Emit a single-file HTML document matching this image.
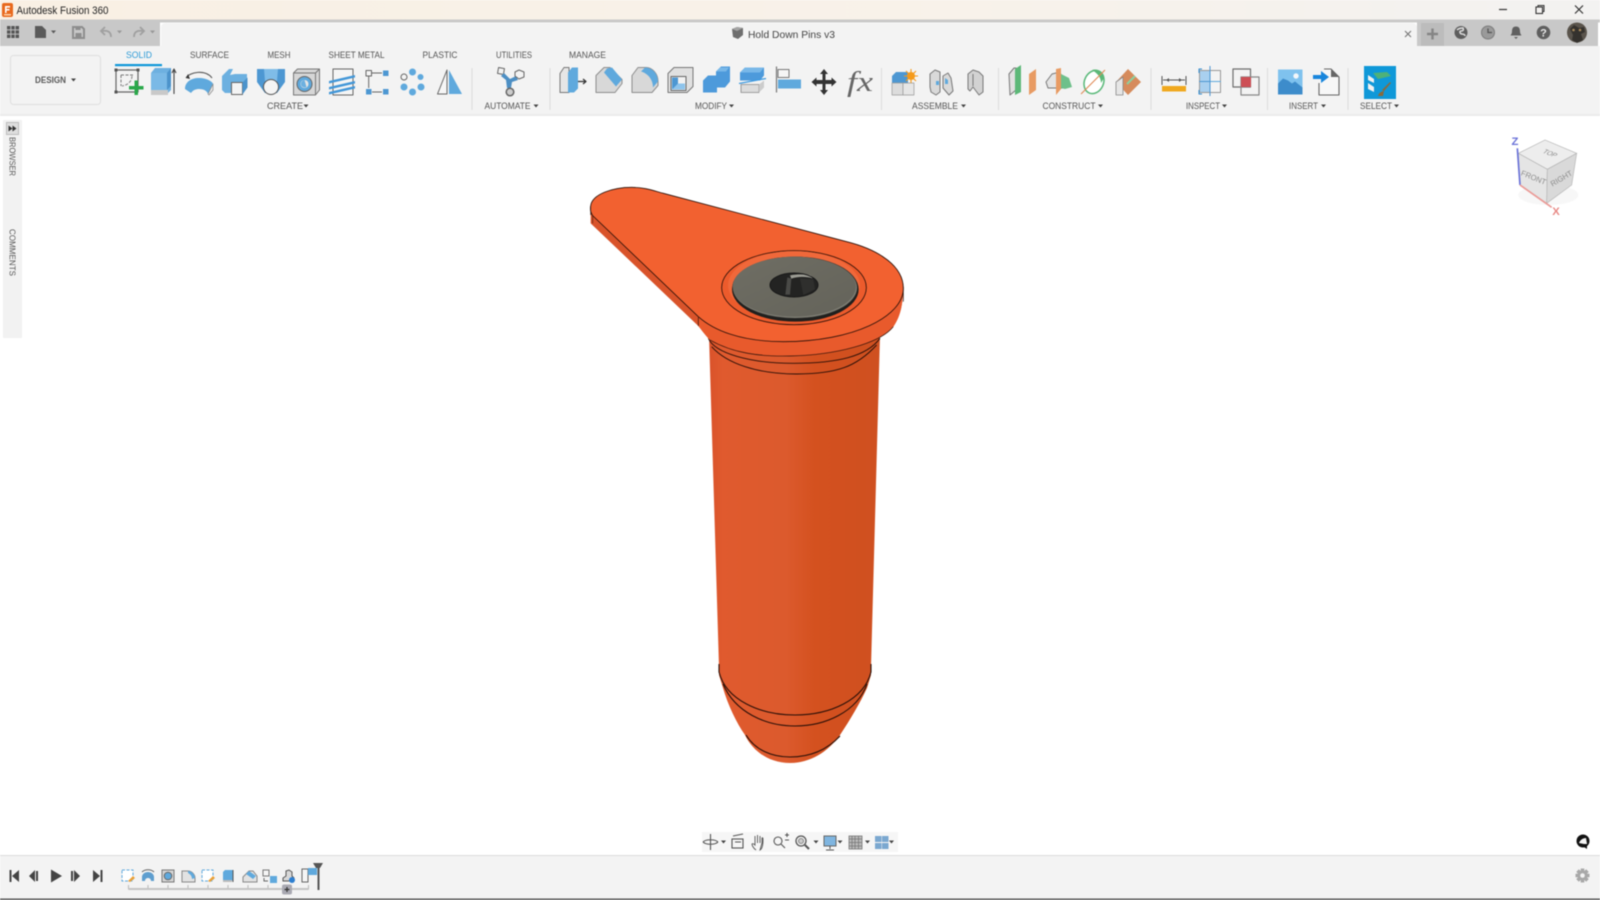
<!DOCTYPE html>
<html lang="en"><head><meta charset="utf-8"><title>Autodesk Fusion 360</title>
<style>
html,body{margin:0;padding:0;background:#fff;width:1600px;height:900px;overflow:hidden}
svg{display:block;filter:blur(.4px)}
text{font-family:"Liberation Sans",sans-serif}
.t{font-size:9px;fill:#555;text-anchor:middle}
.a{fill:#444}
.ic *{stroke-linejoin:round}
</style></head><body>
<svg width="1600" height="900" viewBox="0 0 1600 900" xmlns="http://www.w3.org/2000/svg">
<defs>
<linearGradient id="tb" x1="0" x2="1" y1="0" y2="0"><stop offset="0" stop-color="#f9f0e4"/><stop offset=".6" stop-color="#f8f2ea"/><stop offset="1" stop-color="#f3f2f1"/></linearGradient>
<linearGradient id="cyl" x1="0" x2="1" y1="0" y2="0"><stop offset="0" stop-color="#d9522a"/><stop offset=".08" stop-color="#e05a2e"/><stop offset=".45" stop-color="#dc5a2d"/><stop offset=".62" stop-color="#d4511f"/><stop offset="1" stop-color="#cf5020"/></linearGradient>
<linearGradient id="head" x1="0" x2="1" y1="0" y2="1"><stop offset="0" stop-color="#6f6e64"/><stop offset="1" stop-color="#64635a"/></linearGradient>
</defs>

<!-- title bar -->
<rect width="1600" height="20" fill="url(#tb)"/>
<rect y="19.500" width="1600" height="3" fill="#c9c9c8"/>
<rect x="0" y="20" width="160" height="26" fill="#c8c8c8"/>
<rect x="1417" y="20" width="181" height="26" fill="#c8c8c8"/>
<path d="M161 114V28q0-5 5-5H1412q5 0 5 5V46H1600V114Z" fill="#f3f3f3"/>
<rect y="46" width="162" height="68" fill="#f3f3f3"/>
<rect y="114" width="1600" height="2" fill="#ebebeb"/>

<!-- app logo -->
<rect x="2" y="3" width="11" height="14" rx="2" fill="#e8691d"/><path d="M5 6h5v1.600H6.600v1.400H9.500v1.500H6.600V13H5Z" fill="#fff"/><rect x="4" y="14" width="7" height="1.500" fill="#ffd2a8"/>
<text x="16.500" y="14" font-size="11" fill="#222" textLength="92" lengthAdjust="spacingAndGlyphs">Autodesk Fusion 360</text>

<!-- window controls -->
<path d="M1499 9.500h8" stroke="#333" stroke-width="1.200"/>
<rect x="1536" y="7" width="6.500" height="6.500" fill="none" stroke="#333" stroke-width="1.100"/><path d="M1538 7V5.500h6V11.500h-1.500" fill="none" stroke="#333" stroke-width="1"/>
<path d="M1575 5.500l8 8m0-8l-8 8" stroke="#333" stroke-width="1.200"/>

<!-- quick access -->
<g transform="translate(0,-1)">
<g fill="#555"><rect x="7" y="27" width="3.400" height="3.400"/><rect x="11.300" y="27" width="3.400" height="3.400"/><rect x="15.600" y="27" width="3.400" height="3.400"/><rect x="7" y="31.300" width="3.400" height="3.400"/><rect x="11.300" y="31.300" width="3.400" height="3.400"/><rect x="15.600" y="31.300" width="3.400" height="3.400"/><rect x="7" y="35.600" width="3.400" height="3.400"/><rect x="11.300" y="35.600" width="3.400" height="3.400"/><rect x="15.600" y="35.600" width="3.400" height="3.400"/></g>
<path d="M35 27h7l4 4v8H35Z" fill="#5a5a5a"/><path d="M51 31.500h5l-2.500 3Z" fill="#5a5a5a"/>
<path d="M73 28h9l2 2v9H73Z" fill="none" stroke="#8d8d8d" stroke-width="2"/><rect x="75.500" y="28" width="5" height="3" fill="#8d8d8d"/><rect x="75.500" y="34" width="6" height="4" fill="#8d8d8d"/>
<path d="M111 38c0-5-3-7-9-6M105 28l-4 4 4 4" fill="none" stroke="#a0a0a0" stroke-width="1.800"/><path d="M117 31.500h5l-2.500 3Z" fill="#999"/>
<path d="M134 38c0-5 3-7 9-6M140 28l4 4-4 4" fill="none" stroke="#a0a0a0" stroke-width="1.800"/><path d="M150 31.500h5l-2.500 3Z" fill="#999"/>
</g>

<!-- doc title / tab -->
<path d="M732 29l5-2 6 1v7l-5 4-5-2Z" fill="#6e6e6e"/><path d="M732 29l5 2 6-3-6-1Z" fill="#a4a4a4"/>
<text x="748" y="38" font-size="10.500" fill="#444" textLength="87" lengthAdjust="spacingAndGlyphs">Hold Down Pins v3</text>
<path d="M1405 31l6 6m0-6l-6 6" stroke="#777" stroke-width="1.100"/>
<rect x="1421" y="23" width="23" height="23" fill="#bcbcbc"/>
<path d="M1427 34h11M1432.500 28.500v11" stroke="#858585" stroke-width="2.400"/>
<g transform="translate(0,-1)">
<circle cx="1461" cy="33.500" r="6.500" fill="#5e5e5e"/><path d="M1457 31c2-2 4-2 6-2 1 2 0 3-2 3s-1 3 1 3 3 1 3 2" fill="none" stroke="#ddd" stroke-width="1.500"/>
<circle cx="1488" cy="33.500" r="6.500" fill="#9a9a9a" stroke="#7d7d7d"/><path d="M1488 29.500v4h4" fill="none" stroke="#555" stroke-width="1.300"/>
<path d="M1516 27.500c3 0 4 2 4 5 0 2 1 3 1.500 4h-11c.5-1 1.500-2 1.500-4 0-3 1-5 4-5ZM1514 38h4l-2 2Z" fill="#606060"/>
<circle cx="1543.500" cy="33.500" r="6.800" fill="#5f5f5f"/><text x="1543.500" y="37.500" font-size="11" font-weight="bold" fill="#e8e8e8" text-anchor="middle">?</text>
<circle cx="1577" cy="33.500" r="10" fill="#5a544c"/><path d="M1570 30l4-4 5 3 5-1 1 5-4 2 2 6-6 3-5-3 1-5Z" fill="#35322e"/><circle cx="1573.500" cy="31" r="1.300" fill="#a88a5c"/><circle cx="1580" cy="31" r="1.300" fill="#a88a5c"/>
</g>

<!-- design button -->
<rect x="10.500" y="55.500" width="90" height="49" rx="3" fill="#f3f3f3" stroke="#dfdfdf"/>
<text x="35" y="83" font-size="9" font-weight="bold" fill="#5a5a5a" textLength="31" lengthAdjust="spacingAndGlyphs">DESIGN</text>
<path d="M71 78.500h5l-2.500 3Z" fill="#444"/>

<!-- tabs -->
<text class="t" x="139" y="58" style="fill:#2c9ad6" textLength="26" lengthAdjust="spacingAndGlyphs">SOLID</text>
<rect x="115" y="64" width="47" height="2.200" fill="#0f97d8"/>
<text class="t" x="209.500" y="58" textLength="39" lengthAdjust="spacingAndGlyphs">SURFACE</text>
<text class="t" x="279" y="58" textLength="23" lengthAdjust="spacingAndGlyphs">MESH</text>
<text class="t" x="356.500" y="58" textLength="56" lengthAdjust="spacingAndGlyphs">SHEET METAL</text>
<text class="t" x="440" y="58" textLength="35" lengthAdjust="spacingAndGlyphs">PLASTIC</text>
<text class="t" x="514" y="58" textLength="36" lengthAdjust="spacingAndGlyphs">UTILITIES</text>
<text class="t" x="587.500" y="58" textLength="37" lengthAdjust="spacingAndGlyphs">MANAGE</text>

<!-- dividers -->
<g stroke="#dcdcdc"><path d="M472 68V110M550 68V110M881.500 68V110M998.500 68V110M1151 68V110M1267.500 68V110M1348 68V110"/></g>

<!-- group labels -->
<g class="t">
<text class="t" x="285" y="109" textLength="36" lengthAdjust="spacingAndGlyphs">CREATE</text><path class="a" d="M303.500 104.500h5l-2.500 3Z"/>
<text class="t" x="507.500" y="109" textLength="46" lengthAdjust="spacingAndGlyphs">AUTOMATE</text><path class="a" d="M533.500 104.500h5l-2.500 3Z"/>
<text class="t" x="711" y="109" textLength="32" lengthAdjust="spacingAndGlyphs">MODIFY</text><path class="a" d="M729 104.500h5l-2.500 3Z"/>
<text class="t" x="935" y="109" textLength="46" lengthAdjust="spacingAndGlyphs">ASSEMBLE</text><path class="a" d="M961 104.500h5l-2.500 3Z"/>
<text class="t" x="1069" y="109" textLength="53" lengthAdjust="spacingAndGlyphs">CONSTRUCT</text><path class="a" d="M1098 104.500h5l-2.500 3Z"/>
<text class="t" x="1203" y="109" textLength="34" lengthAdjust="spacingAndGlyphs">INSPECT</text><path class="a" d="M1222 104.500h5l-2.500 3Z"/>
<text class="t" x="1303.500" y="109" textLength="29" lengthAdjust="spacingAndGlyphs">INSERT</text><path class="a" d="M1321 104.500h5l-2.500 3Z"/>
<text class="t" x="1376" y="109" textLength="32" lengthAdjust="spacingAndGlyphs">SELECT</text><path class="a" d="M1394 104.500h5l-2.500 3Z"/>
</g>

<!-- CREATE icons -->
<g class="ic">
<g transform="translate(115,69)">
<rect x="1" y="1" width="22" height="22" fill="none" stroke="#666" stroke-width="1.200"/>
<g fill="#555"><rect x="-.5" y="-.5" width="3" height="3"/><rect x="21.500" y="-.5" width="3" height="3"/><rect x="-.5" y="21.500" width="3" height="3"/></g>
<path d="M6 6h12M6 6v11" stroke="#777" fill="none" stroke-dasharray="3 1.500"/><path d="M17 7c0 5-4 9-10 10" stroke="#888" fill="none" stroke-width="1.100" stroke-dasharray="3 1.500"/>
<path d="M14 17h5.500v-5.500h3.500V17h5.500v3.500h-5.500V26h-3.500v-5.500H14Z" fill="#2aa84a"/>
</g>
<g transform="translate(0,-2)">
<path d="M151 75l4-5h16v22l-3 3H151Z" fill="#6db0e0"/><path d="M151 75h16v17h-16Z" fill="#7ab9e6"/><path d="M167 75l4-5v18l-4 4Z" fill="#4c93cb"/><path d="M151 92h17v5H151Z" fill="#c9c9c9"/><path d="M174 96V72m-2 3l2-4 2 4" stroke="#444" fill="none" stroke-width="1.100"/>
<path d="M186 80c3-6 20-9 26 0" fill="none" stroke="#555" stroke-width="1.100"/><path d="M188 76l-2 4 4 1Z" fill="#333"/>
<path d="M185 91c0-7 6-11 14-11s14 4 14 6l-5 10c-1-3-4-5-9-5-3 0-6 1-8 4Z" fill="#5fa9dd"/><path d="M208 96l5-10v6l-4 5Z" fill="#e8e8e8" stroke="#888" stroke-width=".7"/>
<path d="M222 82v-4l7-7 4 0-3 6 5-1h12v8l-4 4h-11v7h-7l-3-3Z" fill="#6cb0e0"/><rect x="231.500" y="84.500" width="11" height="12" fill="#f4f4f4" stroke="#666"/><path d="M242.500 84.500l5-5v10l-5 7Z" fill="#4c93cb"/>
<path d="M257 71h28v13l-8 11h-12l-8-11Z" fill="#4d97d2"/><path d="M264 71h14l-1 12h-12Z" fill="#7fbce8"/><circle cx="271" cy="89" r="7.500" fill="#f4f4f4" stroke="#555"/>
<path d="M293.500 75l4-4h22v21l-4 5h-22Z" fill="#d6d6d6" stroke="#777"/><path d="M315.500 75h-22M315.500 75v22M315.500 75l4-4" stroke="#777" fill="none"/><circle cx="304.500" cy="86" r="7.500" fill="#5fa9dd" stroke="#666"/><circle cx="304.500" cy="86" r="4" fill="#e5e5e5"/><path d="M304.500 82a4 4 0 0 0-3 6 4 4 0 0 0 5 1Z" fill="#6cb0e0"/>
<rect x="333" y="71" width="20" height="26" fill="#f5f5f5" stroke="#666"/><path d="M329 83l26-6v2.500l-26 6ZM329 89l26-6v2.500l-26 6ZM329 94l26-6v2.500l-26 6Z" fill="#4397d8"/>
<rect x="366" y="72.500" width="5.500" height="5.500" fill="#f4f4f4" stroke="#666"/><rect x="383" y="72.500" width="5.500" height="5.500" fill="#4d97d2"/><rect x="366" y="91" width="5.500" height="5.500" fill="#4d97d2"/><rect x="383" y="91" width="5.500" height="5.500" fill="#4d97d2"/><path d="M372 75h10M368.700 78.500V90M372 94h10" stroke="#666"/>
<circle cx="412.500" cy="74" r="3.500" fill="#5fa9dd"/><circle cx="404" cy="79" r="3" fill="#f4f4f4" stroke="#666"/><circle cx="420.500" cy="79" r="3" fill="#5fa9dd"/><circle cx="404" cy="89" r="3.500" fill="#5fa9dd"/><circle cx="421" cy="89" r="3.500" fill="#5fa9dd"/><circle cx="412.500" cy="94" r="3.500" fill="#5fa9dd"/>
<path d="M447 72v24h-9.500Z" fill="#f6f6f6" stroke="#666"/><path d="M449 72l13 24h-13Z" fill="#5fa9dd"/>

<!-- automate -->
<rect x="498" y="70" width="6" height="6" fill="#f3f3f3" stroke="#666" transform="rotate(10 501 73)"/>
<path d="M504 75l6 6 6-3 2 4-6 2-1 6h-4l-1-8-5-4Z" fill="#4d8fc4"/><path d="M519 72l5 2v5l-5 2-4-3v-4Z" fill="#f3f3f3" stroke="#666"/><circle cx="510" cy="94" r="3.800" fill="#ccc" stroke="#666" stroke-width="1.500"/>

<!-- MODIFY icons -->
<g transform="translate(0,-.5)">
<path d="M560 76l4-6h5v25h-9Z" fill="#e6e6e6" stroke="#777"/><path d="M568 75l4-5h6v21l-4 4h-6Z" fill="#5fa9dd"/><path d="M578 84h7m-2-2.500l3 2.500-3 2.500" stroke="#333" fill="none" stroke-width="1.200"/>
<path d="M596 78l8-8h6l12 12v4l-7 9H596Z" fill="#d8d8d8" stroke="#8d8d8d"/><path d="M607 71l5-1 10 12-6 7-12-14Z" fill="#5fa9dd"/>
<path d="M632 78l6-8h8c6 0 12 6 12 14v4l-6 7H632Z" fill="#d8d8d8" stroke="#8d8d8d"/><path d="M645 70c8 0 13 7 13 14l-5 6c0-8-5-14-12-16Z" fill="#5fa9dd"/>
<path d="M668 76l6-6h19v19l-6 6h-19Z" fill="#e0e0e0" stroke="#777"/><rect x="671" y="79" width="15" height="14" fill="#f2f2f2" stroke="#666"/><path d="M672 80h6v6h7v6H672Z" fill="#4d97d2"/><path d="M672 92l6-6h7v6Z" fill="#8ec4ec"/>
<path d="M703 83l5-5h8v-4l5-5h9v15l-5 6h-8v5h-14Z" fill="#4d9adb"/><path d="M716 74l4-4h9l-3 4Z" fill="#79b8e8"/>
<path d="M740 75l5-5h19v8l-4 5h-20Z" fill="#4d9adb"/><path d="M745 70h19l-4 5h-20Z" fill="#79b8e8"/><path d="M739 86l27-5" stroke="#3d9ae0" stroke-width="1.200"/><path d="M741 87h18v8h-18Z" fill="#dcdcdc" stroke="#888" stroke-width=".8"/><path d="M759 87l5-4v7l-5 5Z" fill="#ccc"/>
<path d="M776.500 69V95" stroke="#777" stroke-width="1.200"/><rect x="778" y="72" width="11" height="8" fill="#f5f5f5" stroke="#777"/><rect x="778" y="82" width="23" height="9" fill="#5fa9dd"/>
</g>
<path d="M824 71l4 5h-2.500v6h6v-2.500l5 4.500-5 4.500v-2.500h-6v6h2.500l-4 5-4-5h2.500v-6h-6v2.500l-5-4.500 5-4.500v2.500h6v-6H820Z" fill="#333"/>
<text x="847" y="93" font-style="italic" font-size="28" fill="#666" style="font-family:'Liberation Serif',serif" textLength="26" lengthAdjust="spacingAndGlyphs">fx</text>

<!-- ASSEMBLE -->
<path d="M892 78l4-4h12v11h-16Z" fill="#4d97d2"/><rect x="892" y="85" width="11" height="12" fill="#dcdcdc" stroke="#999" stroke-width=".7"/><rect x="903" y="85" width="11" height="12" fill="#e6e6e6" stroke="#999" stroke-width=".7"/><circle cx="911" cy="78" r="4" fill="#f59a1a"/><path d="M911 71v14M904 78h14M906 73l10 10M916 73l-10 10" stroke="#f59a1a" stroke-width="1.100"/>
<path d="M930 76l5-4 5 2v20l-4 3-5-3-1-5Z" fill="#d9d9d9" stroke="#777"/><path d="M943 78l5-3 3 5 2 13-4 4-6-7Z" fill="#d9d9d9" stroke="#777"/><path d="M936 83h3v4h-3ZM945 80l3 2v4h-3Z" fill="#5fa9dd"/>
<path d="M968 76l5-4 6 2 4 4v16l-4 3-3-4-3-4-3 4-2-2Z" fill="#d2d2d2" stroke="#777"/><path d="M973 76v12" stroke="#777"/>

<!-- CONSTRUCT -->
<path d="M1009 76l5-6h2v22l-6 5Z" fill="#e0e0e0" stroke="#777"/><path d="M1015 71l6-4v27l-6 3Z" fill="#5cb878"/><path d="M1029 76l7-5v21l-7 5Z" fill="#e89b63"/>
<path d="M1046 84l6-8 8-2 3 8 1 8h-16Z" fill="#e4e4e4" stroke="#777"/><path d="M1056 71l5-1v21l-5 6Z" fill="#e89b63"/><path d="M1061 76l8 4 3 9-7 2-4-1Z" fill="#6ec08a"/>
<ellipse cx="1094" cy="84" rx="9.500" ry="12" transform="rotate(25 1094 84)" fill="#fff" stroke="#58b878" stroke-width="1.500"/><path d="M1092 72c7-2 12 3 12 8l-3 5c0-6-4-10-9-13Z" fill="#5cb878"/><path d="M1081 96l24-24" stroke="#e08a55" stroke-width="1.100"/>
<path d="M1116 84l12-13 13 13-13 13Z" fill="#d68b5c"/><path d="M1116 84l7-5v18h-7Z" fill="#e6e6e6" stroke="#888" stroke-width=".8"/><path d="M1127 86l8-8" stroke="#8cd0a0" stroke-width="2"/>

<!-- INSPECT -->
<rect x="1162" y="88" width="24" height="5.500" fill="#f0a81e"/><path d="M1162 78v9M1186 78v9M1163 82h22" stroke="#555" fill="none"/><path d="M1166 82l3-2v4ZM1182 82l-3-2v4Z" fill="#555"/>
<path d="M1199 72h11v23h-11Z" fill="#a9d0ef"/><rect x="1199.500" y="72.500" width="21" height="22" fill="none" stroke="#999"/><path d="M1199 83.500h22" stroke="#5fa9dd"/><path d="M1199 83.500h11" stroke="#4d97d2"/><path d="M1202 71h-3v4M1202 96h-3v-4" stroke="#2e8bd0" fill="none"/><path d="M1210 68v30" stroke="#4d97d2"/>
<rect x="1233" y="71" width="17.500" height="18" fill="#f3f3f3" stroke="#6e6e6e" stroke-width="1.200"/><rect x="1241" y="79" width="18" height="18" fill="none" stroke="#888" stroke-width="1.200"/><rect x="1241" y="79" width="10" height="10" fill="#cd4f55"/>

<!-- INSERT -->
<rect x="1278" y="71.500" width="24.500" height="25" fill="#7fc2ee"/><path d="M1278 96.500v-11l5-5 5 2 4 3 3-2 7.500 6v7Z" fill="#3d8ccb"/><circle cx="1296" cy="78" r="2.700" fill="#f3f7fa"/>
<path d="M1324 71h7l8 8v18h-20V85" fill="#f7f7f7" stroke="#666" stroke-width="1.100"/><path d="M1331 71v8h8Z" fill="#666"/><path d="M1313 77h8v-4l8 6-8 6v-4h-8Z" fill="#1986dc"/>

<!-- SELECT -->
<rect x="1364" y="68" width="32" height="33" fill="#0f98d8"/>
<path d="M1373 75l14-1 4 4-13 3Z" fill="#4eb179"/><path d="M1368 77l6 4v4l-6-3ZM1368 85l6 4v5l-6-3Z" fill="#f2f2f2"/><path d="M1378 98c1-4 5-5 6-5l-1 5ZM1382 92l8-8 1 1-7 8Z" fill="#8a6a3c"/>
</g>
</g>

<!-- left panel -->
<rect x="3" y="120" width="19" height="218" fill="#f2f2f2"/>
<rect x="6.500" y="122.500" width="12" height="12" fill="#dedede" stroke="#bdbdbd"/>
<path d="M8.500 125.500l4 3-4 3ZM12.500 125.500l4 3-4 3Z" fill="#333"/>
<text class="t" transform="translate(9.500,137) rotate(90)" x="0" y="0" style="text-anchor:start;font-size:8.500px" textLength="39" lengthAdjust="spacingAndGlyphs">BROWSER</text>
<text class="t" transform="translate(9.500,229) rotate(90)" x="0" y="0" style="text-anchor:start;font-size:8.500px" textLength="47" lengthAdjust="spacingAndGlyphs">COMMENTS</text>

<!-- view cube -->
<g transform="translate(1490,120) scale(.3333)">
<ellipse cx="175" cy="225" rx="90" ry="30" fill="#f2f2f2" opacity=".6"/>
<path d="M85 100L165 60 260 100 172 148Z" fill="#ededed" stroke="#b5b5b5" stroke-width="2"/>
<path d="M85 100L172 148 170 250 90 195Z" fill="#e5e5e5" stroke="#b5b5b5" stroke-width="2"/>
<path d="M172 148L260 100 245 195 170 250Z" fill="#d9d9d9" stroke="#b5b5b5" stroke-width="2"/>
<path d="M82 85L90 195" stroke="#6a72d8" stroke-width="5"/><path d="M90 195L185 262" stroke="#eb9a96" stroke-width="5"/>
<text x="75" y="75" font-size="34" font-weight="bold" fill="#6a72d8" text-anchor="middle">Z</text>
<text x="198" y="285" font-size="34" font-weight="bold" fill="#e88a86" text-anchor="middle">X</text>
<text transform="translate(175,105) rotate(22) skewX(-25)" font-size="20" fill="#8c8c8c" text-anchor="middle">TOP</text>
<text transform="translate(128,180) rotate(22)" font-size="23" fill="#8c8c8c" text-anchor="middle">FRONT</text>
<text transform="translate(218,182) rotate(-30)" font-size="23" fill="#8c8c8c" text-anchor="middle">RIGHT</text>
</g>

<!-- MODEL -->
<!-- cylinder + nose as one silhouette -->
<path d="M709 335H880L871 667V675L867 688C860 703 850 720 840 735C828 752 810 763 790 763C768 763 752 750 745 735C736 722 728 705 723 688L719 675V667Z" fill="url(#cyl)"/>
<g fill="none" stroke="#2a1008" stroke-width="1.100">
<path d="M719 664V672C726 700 760 715 795 715C830 715 864 700 871 672V664"/>
<path d="M723 684C735 712 765 726 795 726C825 726 857 712 867 684"/>
<path d="M746 735C755 750 772 757 790 757C808 757 826 751 840 736"/>
</g>
<!-- model upper in crop coordinates -->
<g transform="translate(570,170) scale(.33333)">
<g fill="none" stroke="#2a1008" stroke-width="2.800">
<path d="M415 505C435 550 540 580 670 580S890 560 930 505"/>
<path d="M425 530C470 580 560 612 680 612S860 590 920 525"/>
</g>
<!-- flange side -->
<path d="M62 108V160L385 468C395 480 405 495 420 510C490 550 570 560 660 558C800 555 930 520 970 470C990 440 998 410 1000 355Z" fill="#d9532a"/>
<path d="M385 440V468C395 480 405 495 420 510C490 550 570 560 660 558C800 555 930 520 970 470C990 440 998 410 1000 355Z" fill="#e85a2c" stroke="none"/>
<path d="M420 510C490 550 570 560 660 558C800 555 930 520 970 470" fill="none" stroke="#2a1008" stroke-width="2"/>
<path d="M385 442L385 468" stroke="#2a1008" stroke-width="2"/>
<path d="M68 132V160" stroke="#2a1008" stroke-width="1.500"/>
<!-- flange top -->
<path d="M62 108C66 72 130 52 185 52C225 52 250 62 280 70L830 215C930 240 1000 290 1000 355C1000 440 850 515 640 515C510 515 430 480 385 440L68 137C62 128 60 118 62 108Z" fill="#f26130" stroke="#2a1008" stroke-width="2.500"/>
<path d="M62 108V135M1000 350V395" stroke="#2a1008" stroke-width="2" fill="none"/>
<!-- counterbore -->
<ellipse cx="672" cy="353" rx="217" ry="111" fill="#ec5b2c" stroke="#2a1008" stroke-width="2.500"/>
<ellipse cx="672" cy="346" rx="198" ry="103" fill="#f0683a"/>
<ellipse cx="676" cy="358" rx="190" ry="97" fill="#1f1f1d"/>
<ellipse cx="675" cy="353" rx="187" ry="92" fill="#7e7d73" stroke="#2d2d2a" stroke-width="2"/>
<ellipse cx="673" cy="350" rx="185" ry="90" fill="url(#head)"/>
<ellipse cx="672" cy="345" rx="72" ry="36" fill="#232322"/>
<path d="M660 316C680 312 705 312 722 316L728 325C705 318 680 320 664 326Z" fill="#9c9c94"/>
<path d="M652 322L646 374H660L664 326Z" fill="#4a4a47"/>
<path d="M690 325L730 328 735 358 700 375Z" fill="#2f2f2d"/>
<ellipse cx="672" cy="345" rx="72" ry="36" fill="none" stroke="#191919" stroke-width="3"/>
</g>

<!-- nav bar -->
<rect x="702" y="832" width="196" height="20" fill="#f6f6f6"/>
<g fill="none" stroke="#555" stroke-width="1.100">
<path d="M703 842c3-3 12-3 15 0M710.500 834V850M703 842c3 3 12 3 15 0"/>
<rect x="732" y="839" width="11" height="9"/><path d="M733 836l10-2M735 842h6"/>
<path d="M756 850c-3-2-4-5-4-6 1-1 2 0 3 1v-7m0 5v-7m2.500 7v-8m2.500 8v-7m2 7v-5c1-1 1 1 1 2 0 5-1 9-3 10Z" stroke-width=".9"/>
<circle cx="778" cy="841" r="4"/><path d="M781 844l4 4M785 835h4M787 833v4M785 840h4" />
<circle cx="801" cy="841" r="5" stroke-width="1.300"/><circle cx="801" cy="841" r="2.500" fill="#ccc" stroke="#888"/><path d="M805 845l4 4" stroke-width="2"/>
</g>
<rect x="824" y="836" width="12" height="10" fill="#7fb5e0" stroke="#666"/><path d="M830 846v3M826 850h8" stroke="#555"/>
<g fill="none" stroke="#777" stroke-width=".8"><rect x="849" y="836" width="13" height="13" fill="#bbb"/><path d="M852 836v13M855 836v13M858.500 836v13M849 839h13M849 842.500h13M849 846h13"/></g>
<g fill="#7ba8d0"><rect x="875" y="836" width="6.500" height="6"/><rect x="882" y="836" width="6.500" height="6"/><rect x="875" y="843" width="6.500" height="6"/><rect x="882" y="843" width="6.500" height="6"/></g>
<g fill="#444"><path d="M721 840.500h5l-2.500 3ZM813.500 840.500h5l-2.500 3ZM837.500 840.500h5l-2.500 3ZM865 840.500h5l-2.500 3ZM889 840.500h5l-2.500 3Z"/></g>

<!-- capture icon -->
<circle cx="1583" cy="841" r="6.500" fill="#111"/><path d="M1579 843c1-3 4-5 7-5l1 6h-3Z" fill="#f5f5f5"/><path d="M1584 847l3 2 0-3Z" fill="#111"/>

<!-- timeline -->
<rect y="855" width="1600" height="44" fill="#f3f3f3"/>
<rect y="855" width="1600" height="1" fill="#dcdcdc"/>
<rect y="898.500" width="1600" height="1.500" fill="#555"/>
<g fill="#444">
<path d="M9.500 870h2v12h-2ZM19 870v12l-7-6Z"/>
<path d="M29 876l6-6v12ZM36 871h2v10h-2Z"/>
<path d="M51 869.500l11 6.500-11 6.500Z"/>
<path d="M71 871h2v10h-2ZM74 870l6 6-6 6Z"/>
<path d="M93 870l7 6-7 6ZM100.500 870h2v12h-2Z"/>
</g>
<g>
<rect x="122" y="870" width="11" height="11" fill="#fff" stroke="#5fa9dd" stroke-dasharray="3 1.500"/><path d="M128 881l5-5 2 2-5 4Z" fill="#e9a038"/>
<path d="M142 881v-4c0-3 3-5 6-5s6 2 6 5v4h-3c0-4-6-4-6 0Z" fill="#5e9ecf"/><path d="M142 872c3-3 9-3 12 0" fill="none" stroke="#666"/>
<rect x="162" y="870" width="12" height="12" fill="#d5d5d5" stroke="#777"/><circle cx="168" cy="876" r="3.800" fill="#5fa9dd" stroke="#666"/>
<path d="M182 871h6c4 0 7 4 7 7v4h-13Z" fill="#e2e2e2" stroke="#888"/><path d="M188 871c4 0 7 4 7 7l-3 1c0-3-2-5-4-6Z" fill="#5fa9dd"/>
<rect x="202" y="870" width="11" height="11" fill="#fff" stroke="#5fa9dd" stroke-dasharray="3 1.500"/><path d="M208 881l5-5 2 2-5 4Z" fill="#e9a038"/>
<path d="M223 872l2-2h8v10l-2 2h-8Z" fill="#5fa9dd"/><path d="M233 870v12" stroke="#555"/><path d="M223 880h9v2h-9Z" fill="#bbb"/>
<path d="M243 877l6-6 4 0 4 5v6h-14Z" fill="#e2e2e2" stroke="#888"/><path d="M246 874l3-3 7 5-3 3Z" fill="#5fa9dd"/>
<rect x="263" y="870" width="6" height="6" fill="#f5f5f5" stroke="#777"/><rect x="270" y="876" width="7" height="7" fill="#5fa9dd"/><path d="M264 878v3h4" stroke="#666" fill="none"/>
<path d="M283 881v-3l3-2v-5l3-1 3 2v4l2 2v3Z" fill="#d8d8d8" stroke="#555"/><circle cx="292" cy="880" r="3" fill="#2e7fd0"/>
<rect x="302" y="869" width="6" height="13" fill="#f5f5f5" stroke="#666"/><rect x="308" y="868" width="9" height="7" fill="#5fa9dd"/>
</g>
<path d="M128.500 885V889H308.500V885M148 885v4M168 885v4M188 885v4M208 885v4M228 885v4M248 885v4M268 885v4M288 885v4" fill="none" stroke="#bdbdbd" stroke-width="1.100"/>
<path d="M128.500 889H308.500" stroke="#c4c4c4" stroke-width="2"/>
<rect x="282" y="884.500" width="10" height="10" rx="2" fill="#a9a9b2"/><path d="M284.500 889.500h5M287 887v5" stroke="#333" stroke-width="1.200"/>
<path d="M313 863h10l-3 5h-4Z" fill="#555"/><path d="M318.500 866V890" stroke="#555" stroke-width="2"/>
<!-- gear -->
<g transform="translate(1582.500,875.500)" fill="#a8a8a8"><circle r="5"/><path d="M-1.800-7h3.600v14h-3.600ZM-7-1.800h14v3.600h-14Z"/><path d="M-1.800-7h3.600v14h-3.600ZM-7-1.800h14v3.600h-14Z" transform="rotate(45)"/><circle r="2.300" fill="#f3f3f3"/></g>
</svg>
</body></html>
